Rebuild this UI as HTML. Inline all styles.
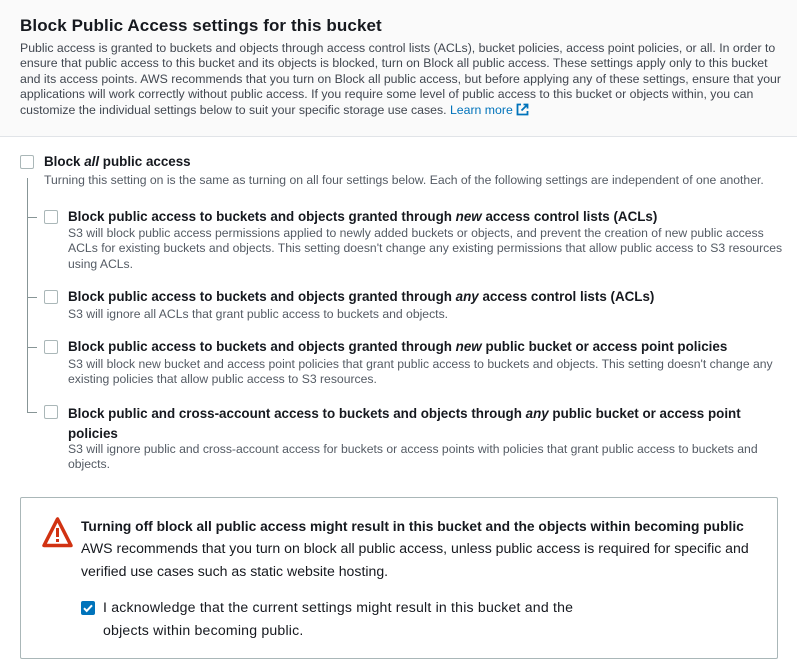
<!DOCTYPE html>
<html><head><meta charset="utf-8"><style>
*{margin:0;padding:0;box-sizing:border-box}
body{width:797px;height:667px;background:#fff;font-family:"Liberation Sans",Arial,sans-serif;color:#16191f;position:relative;overflow:hidden}
.hdr{position:absolute;left:0;top:0;width:797px;height:137px;background:#fafafa;border-bottom:1px solid #e1e4e8}
.t{position:absolute;white-space:nowrap}
h1{position:absolute;left:20px;top:16px;font-size:17px;font-weight:bold;letter-spacing:.1px}
.p{position:absolute;left:20px;top:41px;width:765px;font-size:12.3px;line-height:15.4px;color:#414750}
a{color:#0073bb;text-decoration:none}
.cb{position:absolute;width:14px;height:14px;border:1px solid #aab7b8;border-radius:2px;background:#fff}
.b{font-size:13.4px;font-weight:bold}
.d{font-size:12.2px;color:#545b64;line-height:15.3px;white-space:normal}
.ln{position:absolute;background:#879596}
.warn{position:absolute;left:20px;top:497px;width:758px;height:162px;border:1px solid #aab7b8;border-radius:2px}
.w{font-size:14.1px;line-height:23px}
</style></head><body>
<div class="hdr"></div>
<h1>Block Public Access settings for this bucket</h1>
<div class="p">Public access is granted to buckets and objects through access control lists (ACLs), bucket policies, access point policies, or all. In order to ensure that public access to this bucket and its objects is blocked, turn on Block all public access. These settings apply only to this bucket and its access points. AWS recommends that you turn on Block all public access, but before applying any of these settings, ensure that your applications will work correctly without public access. If you require some level of public access to this bucket or objects within, you can customize the individual settings below to suit your specific storage use cases. <a>Learn more <svg width="13" height="13" viewBox="0 0 13 13" style="vertical-align:-2px"><path d="M5 1.5H1.5v10h10V8M7.5 1.5h4v4M11.5 1.5L5.5 7.5" fill="none" stroke="#0073bb" stroke-width="1.8"/></svg></a></div>

<div class="cb" style="left:20px;top:155px"></div>
<div class="t b" style="left:44px;top:154px">Block <i>all</i> public access</div>
<div class="t d" style="left:44px;top:173px;white-space:nowrap">Turning this setting on is the same as turning on all four settings below. Each of the following settings are independent of one another.</div>

<div class="ln" style="left:27px;top:178px;width:1px;height:235px"></div>
<div class="ln" style="left:27px;top:217px;width:10px;height:1px"></div>
<div class="ln" style="left:27px;top:297px;width:10px;height:1px"></div>
<div class="ln" style="left:27px;top:347px;width:10px;height:1px"></div>
<div class="ln" style="left:27px;top:412px;width:10px;height:1px"></div>

<div class="cb" style="left:44px;top:210px"></div>
<div class="t b" style="left:68px;top:209px">Block public access to buckets and objects granted through <i>new</i> access control lists (ACLs)</div>
<div class="t d" style="left:68px;top:226px;width:725px">S3 will block public access permissions applied to newly added buckets or objects, and prevent the creation of new public access<br>ACLs for existing buckets and objects. This setting doesn't change any existing permissions that allow public access to S3 resources<br>using ACLs.</div>

<div class="cb" style="left:44px;top:290px"></div>
<div class="t b" style="left:68px;top:289px">Block public access to buckets and objects granted through <i>any</i> access control lists (ACLs)</div>
<div class="t d" style="left:68px;top:307px;white-space:nowrap">S3 will ignore all ACLs that grant public access to buckets and objects.</div>

<div class="cb" style="left:44px;top:340px"></div>
<div class="t b" style="left:68px;top:339px">Block public access to buckets and objects granted through <i>new</i> public bucket or access point policies</div>
<div class="t d" style="left:68px;top:357px;width:725px">S3 will block new bucket and access point policies that grant public access to buckets and objects. This setting doesn't change any<br>existing policies that allow public access to S3 resources.</div>

<div class="cb" style="left:44px;top:405px"></div>
<div class="t b" style="left:68px;top:404px;white-space:normal;width:715px;line-height:20px">Block public and cross-account access to buckets and objects through <i>any</i> public bucket or access point policies</div>
<div class="t d" style="left:68px;top:442px;width:725px">S3 will ignore public and cross-account access for buckets or access points with policies that grant public access to buckets and<br>objects.</div>

<div class="warn"></div>
<svg style="position:absolute;left:41px;top:516px" width="33" height="33" viewBox="0 0 33 33"><path d="M16.5 3L3 29.5h27z" fill="none" stroke="#d13212" stroke-width="3.5" stroke-linejoin="round"/><rect x="15" y="12" width="3" height="9" fill="#d13212"/><rect x="15" y="23" width="3" height="3" fill="#d13212"/></svg>
<div class="t w" style="left:81px;top:515px;font-weight:bold;font-size:13.8px">Turning off block all public access might result in this bucket and the objects within becoming public</div>
<div class="t w" style="left:81px;top:537px;white-space:normal;width:690px">AWS recommends that you turn on block all public access, unless public access is required for specific and verified use cases such as static website hosting.</div>
<svg style="position:absolute;left:81px;top:601px" width="14" height="14" viewBox="0 0 14 14"><rect width="14" height="14" rx="2" fill="#0073bb"/><path d="M3 7.2l2.7 2.7L11 4.3" fill="none" stroke="#fff" stroke-width="2"/></svg>
<div class="t w" style="left:103px;top:596px;white-space:normal;width:490px;letter-spacing:.2px">I acknowledge that the current settings might result in this bucket and the objects within becoming public.</div>
</body></html>
